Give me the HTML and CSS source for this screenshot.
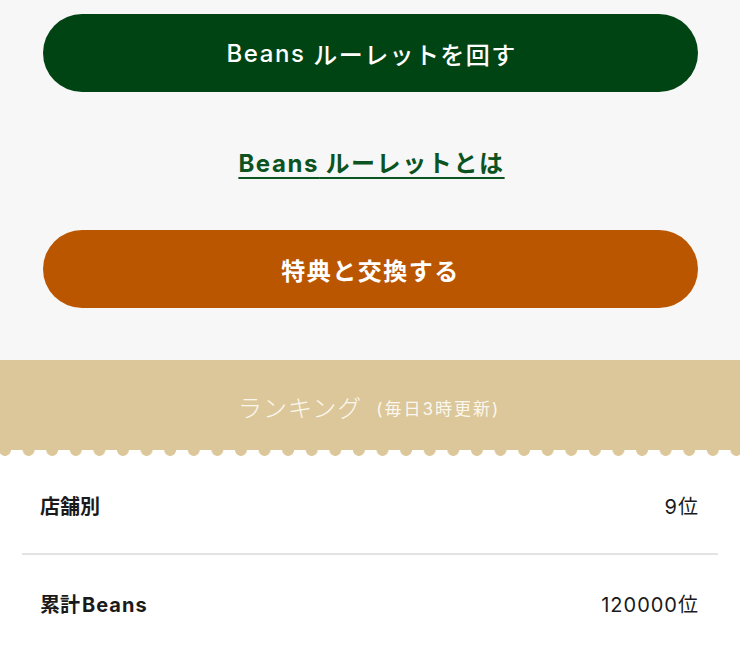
FILE: index.html
```html
<!DOCTYPE html>
<html lang="ja">
<head>
<meta charset="utf-8">
<link rel="stylesheet" href="styles.css">
</head>
<body>
<div class="top">
  <a class="btn btn-green" href="#"><span class="latin">Beans</span> ルーレットを回す</a>
  <div class="link-row"><a class="about" href="#"><span class="latin">Beans</span> ルーレットとは</a></div>
  <a class="btn btn-orange" href="#">特典と交換する</a>
</div>
<section class="ranking">
  <div class="band">
    <h2 class="band-title">ランキング<span class="sub">(毎日3時更新)</span></h2>
  </div>
  <div class="scallop"></div>
  <ul class="rows">
    <li class="row"><span class="label">店舗別</span><span class="value">9位</span></li>
    <li class="row"><span class="label">累計<span class="latin-sm">Beans</span></span><span class="value">120000位</span></li>
  </ul>
</section>
</body>
</html>
```

FILE: styles.css
```css
* { box-sizing: border-box; }
html, body { margin: 0; padding: 0; }
body {
  width: 740px;
  background: #ffffff;
  font-family: Inter, "Noto Sans CJK JP", sans-serif;
  color: #1a1a1a;
}
.top {
  background: #f7f7f7;
  padding: 14px 42px 52px 43px;
  display: flex;
  flex-direction: column;
}
.btn {
  display: flex;
  align-items: center;
  justify-content: center;
  height: 78px;
  border-radius: 39px;
  color: #ffffff;
  text-decoration: none;
  font-size: 24px;
  font-weight: 500;
  letter-spacing: 1.4px;
  white-space: pre;
}
.latin {
  letter-spacing: 1.6px;
}
.btn-green { background: #004414; padding-left: 2px; }
.btn-orange { background: #bb5600; letter-spacing: 1.5px; font-weight: 600; }
.link-row {
  display: flex;
  justify-content: center;
  height: 138px;
  align-items: center;
}
.about {
  color: #0b5320;
  font-size: 24px;
  font-weight: 700;
  letter-spacing: 1.6px;
  text-decoration: underline;
  text-decoration-thickness: 2px;
  text-underline-offset: 5px;
  padding-left: 2px;
  word-spacing: -1px;
}
.ranking { background: #ffffff; }
.band {
  background: #dcc79a;
  height: 90px;
  display: flex;
  align-items: center;
  justify-content: center;
}
.band-title {
  margin: 0;
  color: #fbf7ee;
  font-size: 24px;
  font-weight: 300;
  letter-spacing: 1px;
  display: flex;
  align-items: center;
  gap: 14px;
  padding-top: 2px;
  padding-right: 2px;
}
.sub {
  font-size: 17px;
  font-weight: 400;
  letter-spacing: 2px;
  padding-top: 2px;
}
.scallop {
  height: 7px;
  background-image: radial-gradient(circle at 50% 0, #dcc79a 5.5px, rgba(220,199,154,0) 6.2px);
  background-size: 23.6px 7px;
  background-repeat: repeat-x;
  background-position: -6.8px 0;
}
.rows {
  list-style: none;
  margin: 0 22px;
  padding: 0;
}
.row {
  display: flex;
  justify-content: space-between;
  align-items: center;
  height: 96px;
  padding: 0 20px 0 18px;
  font-size: 20px;
}
.row + .row { border-top: 2px solid #e3e3e3; height: 98px; }
.label { font-weight: 700; }
.latin-sm { letter-spacing: 1px; margin-left: 2px; }
.value { font-weight: 400; letter-spacing: 1px; margin-right: -1px; }
```
